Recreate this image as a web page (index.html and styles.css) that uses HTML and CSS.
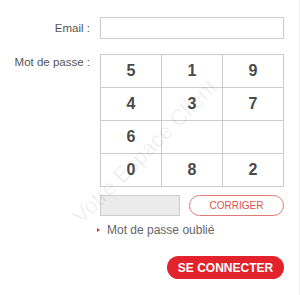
FILE: index.html
```html
<!DOCTYPE html>
<html>
<head>
<meta charset="utf-8">
<link rel="stylesheet" href="styles.css">
</head>
<body>
<div class="page">
  <div class="form">
    <label class="label label-email">Email :</label>
    <div class="input"></div>

    <label class="label label-pass">Mot de passe :</label>
    <div class="keypad">
      <div class="key">5</div><div class="key">1</div><div class="key">9</div>
      <div class="key">4</div><div class="key">3</div><div class="key">7</div>
      <div class="key">6</div><div class="key"></div><div class="key"></div>
      <div class="key">0</div><div class="key">8</div><div class="key">2</div>
    </div>

    <div class="field actions">
      <div class="code"></div>
      <button class="btn-outline">CORRIGER</button>
    </div>

    <div class="field forgot">
      <span class="arrow"></span>
      <span>Mot de passe oublié</span>
    </div>

    <div class="field submit-row">
      <button class="btn-primary">SE CONNECTER</button>
    </div>
  </div>
  <div class="watermark">Votre Espace Client</div>
</div>
</body>
</html>
```

FILE: styles.css
```css
* { box-sizing: border-box; }
html, body { margin: 0; padding: 0; background: #fff; }
body {
  font-family: "Liberation Sans", Arial, sans-serif;
  color: #555;
  width: 300px;
  height: 295px;
  overflow: hidden;
}
.page {
  position: relative;
  width: 300px;
  height: 295px;
  border-right: 1px solid #f0f0f0;
  padding-top: 17px;
}
.form {
  display: grid;
  grid-template-columns: 90px 184px;
  column-gap: 10px;
  align-items: start;
}
.label {
  font-size: 11.5px;
  line-height: 14px;
  text-align: right;
  color: #555;
}
.label-email { margin-top: 4px; }
.label-pass { margin-top: 1px; }
.input {
  height: 22px;
  border: 1px solid #ccc;
  background: #fff;
  margin-bottom: 15px;
}
.keypad {
  display: grid;
  grid-template-columns: repeat(3, 1fr);
  border-top: 1px solid #ccc;
  border-left: 1px solid #ccc;
  width: 184px;
}
.key {
  height: 33px;
  border-right: 1px solid #ccc;
  border-bottom: 1px solid #ccc;
  display: flex;
  align-items: center;
  justify-content: center;
  font-size: 16px;
  font-weight: bold;
  color: #4a4a4a;
}
.field { grid-column: 2; }
.actions {
  display: flex;
  justify-content: space-between;
  margin-top: 8px;
}
.code {
  width: 80px;
  height: 21px;
  background: #ebebeb;
  border: 1px solid #ccc;
}
.btn-outline {
  width: 95px;
  height: 21px;
  border: 1px solid #e07a76;
  border-radius: 11px;
  background: #fff;
  color: #e0504c;
  font-family: inherit;
  font-size: 10px;
  padding: 0;
}
.forgot {
  display: flex;
  align-items: center;
  gap: 7px;
  margin-top: 7px;
  margin-left: -3px;
  font-size: 12px;
  line-height: 14px;
  color: #666;
}
.arrow {
  width: 0;
  height: 0;
  border-top: 2.5px solid transparent;
  border-bottom: 2.5px solid transparent;
  border-left: 3px solid #e0302c;
}
.submit-row {
  display: flex;
  justify-content: flex-end;
  margin-top: 19px;
}
.btn-primary {
  width: 117px;
  height: 23px;
  border: none;
  border-radius: 12px;
  background: #e3232b;
  color: #fff;
  font-family: inherit;
  font-weight: bold;
  font-size: 12px;
  padding: 0;
}
.watermark {
  position: absolute;
  left: 145px;
  top: 152px;
  transform: translate(-50%, -50%) rotate(-45deg);
  font-size: 22px;
  white-space: nowrap;
  color: rgba(0, 0, 0, 0.07);
  pointer-events: none;
}
```
